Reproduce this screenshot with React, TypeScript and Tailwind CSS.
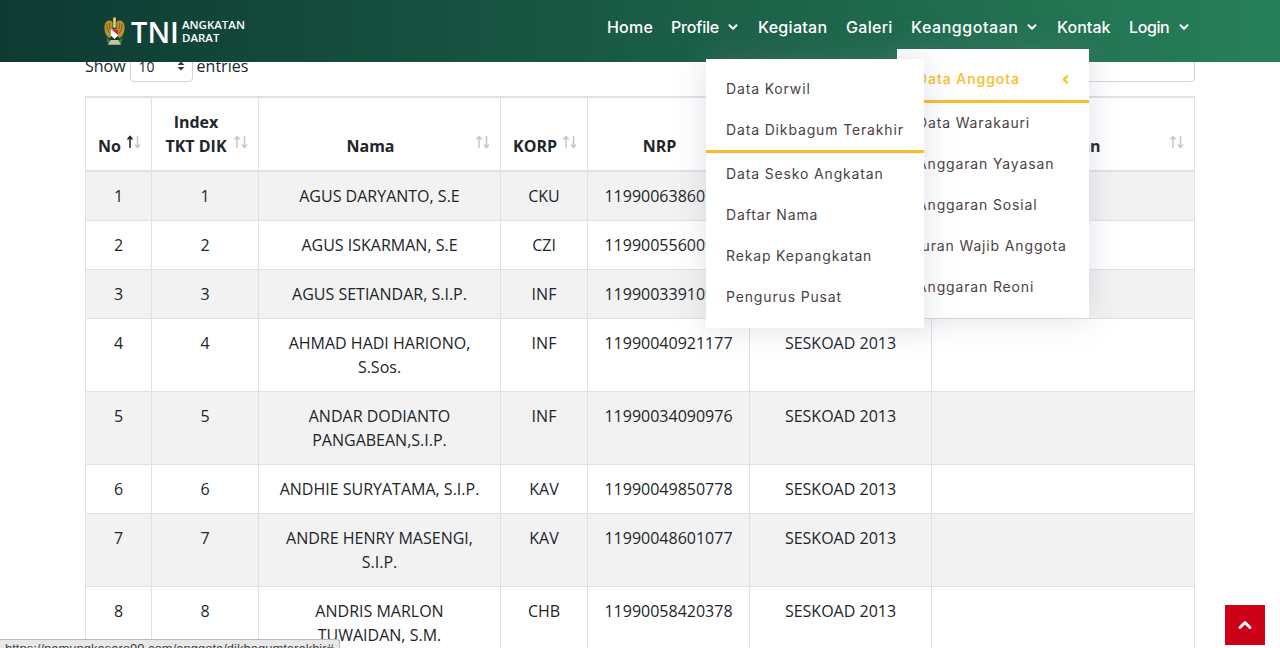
import { ChevronDown, ChevronLeft, ChevronUp } from 'lucide-react';

const rows = [
    { no: 1, nama: 'AGUS DARYANTO, S.E', korp: 'CKU', nrp: '11990063860778' },
    { no: 2, nama: 'AGUS ISKARMAN, S.E', korp: 'CZI', nrp: '11990055600978' },
    { no: 3, nama: 'AGUS SETIANDAR, S.I.P.', korp: 'INF', nrp: '11990033910976' },
    { no: 4, nama: 'AHMAD HADI HARIONO, S.Sos.', korp: 'INF', nrp: '11990040921177' },
    { no: 5, nama: 'ANDAR DODIANTO PANGABEAN,S.I.P.', korp: 'INF', nrp: '11990034090976' },
    { no: 6, nama: 'ANDHIE SURYATAMA, S.I.P.', korp: 'KAV', nrp: '11990049850778' },
    { no: 7, nama: 'ANDRE HENRY MASENGI, S.I.P.', korp: 'KAV', nrp: '11990048601077' },
    { no: 8, nama: 'ANDRIS MARLON TUWAIDAN, S.M.', korp: 'CHB', nrp: '11990058420378' },
];

const menuProfile = ['Data Korwil', 'Data Dikbagum Terakhir', 'Data Sesko Angkatan', 'Daftar Nama', 'Rekap Kepangkatan', 'Pengurus Pusat'];
const menuAnggota = ['Data Warakauri', 'Anggaran Yayasan', 'Anggaran Sosial', 'Iuran Wajib Anggota', 'Anggaran Reoni'];

function SortArrows({ active }: { active?: boolean }) {
    return (
        <svg className="absolute right-[9px] bottom-[21px]" width="16" height="14" viewBox="0 0 16 14" fill="none" strokeWidth="1.5">
            <path d="M4 13V2M1.5 4.5 4 1.5l2.5 3" stroke={active ? '#212529' : '#c4c6c8'} />
            <path d="M11.5 1v11M9 9.5l2.5 3 2.5-3" stroke="#c4c6c8" />
        </svg>
    );
}

function Th({ children, active }: { children: React.ReactNode; active?: boolean }) {
    return (
        <th className="relative border border-b-2 border-[#dee2e6] pt-3 pb-3 pl-3 pr-[30px] align-bottom text-center font-bold">
            {children}
            <SortArrows active={active} />
        </th>
    );
}

function Emblem() {
    return (
        <svg width="21" height="30" viewBox="0 0 22 31">
            <path d="M9 6C5 3 1 5 .5 11c-.4 5 1.5 10 5.5 12l3-4z" fill="#b8912f" />
            <path d="M13 6c4-3 8-1 8.5 5 .4 5-1.5 10-5.5 12l-3-4z" fill="#b8912f" />
            <path d="M3 8c0 4 1 8 4 11M5.500 7c0 3 .5 6 2 9M19 8c0 4-1 8-4 11M16.500 7c0 3-.5 6-2 9" stroke="#6b5a1e" strokeWidth=".9" fill="none" />
            <rect x="9.700" y="3" width="2.600" height="9" fill="#f0d878" />
            <circle cx="11" cy="2.500" r="1.500" fill="#e8c95a" />
            <path d="M7 14h8v6l-4 4-4-4z" fill="#fff" />
            <path d="M8 14h7v6z" fill="#d3202a" />
            <path d="M2.500 21c2 4 5 6 8.500 6s6.500-2 8.500-6l-1 7H3.500z" fill="#3d7a3a" />
            <path d="M7 25h8l3 5H4z" fill="#c9c2a4" />
        </svg>
    );
}

function NavItem({ label, labelClass, caret }: { label: string; labelClass: string; caret?: boolean }) {
    return (
        <a className="flex items-center gap-[7px] text-white">
            <span className={labelClass}>{label}</span>
            {caret && <ChevronDown size={14} strokeWidth={3.5} />}
        </a>
    );
}

export default function App() {
    return (
        <div className="relative h-[648px] w-full overflow-hidden bg-white text-[#212529] [font-family:'Open_Sans',sans-serif]">
            <header className="absolute inset-x-0 top-0 z-10 flex h-[62px] items-center justify-between bg-linear-to-r from-[#0e3a32] to-[#278059] pl-[104px] pr-[89px]">
                <div className="flex items-center gap-[5px] text-white">
                    <Emblem />
                    <span className="ml-px text-[29px] leading-none font-semibold">TNI</span>
                    <span className="-ml-[2px] text-[11.5px] leading-[13px] font-semibold">
                        ANGKATAN
                        <br />
                        DARAT
                    </span>
                </div>
                <nav className="mb-[9px] flex items-center gap-[18px] text-[16px] font-medium whitespace-nowrap [font-family:Inter,sans-serif]">
                    <NavItem label="Home" labelClass="w-[46px] tracking-[0.2px]" />
                    <NavItem label="Profile" labelClass="w-[48px] tracking-[-0.2px]" caret />
                    <NavItem label="Kegiatan" labelClass="w-[70px] tracking-[0.3px]" />
                    <NavItem label="Galeri" labelClass="w-[47px] tracking-[0.3px]" />
                    <NavItem label="Keanggotaan" labelClass="w-[107px] tracking-[0.55px]" caret />
                    <NavItem label="Kontak" labelClass="w-[54px] tracking-[0.05px]" />
                    <NavItem label="Login" labelClass="w-[41px] tracking-[-0.4px]" caret />
                </nav>
            </header>

            <main className="mx-auto w-[1110px] pt-[50px]">
                <div className="mb-[14px] flex h-8 items-center justify-between">
                    <div className="flex items-center gap-[4px]">
                        Show
                        <div className="flex h-8 w-[63px] items-center justify-between rounded border border-[#ced4da] pl-2 pr-[7px] text-sm">
                            <span className="mt-[2px]">10</span>
                            <svg width="8" height="12" viewBox="0 0 8 12" fill="#343a40">
                                <path d="M4 1.500 7.500 5h-7zM4 10.500.5 7h7z" />
                            </svg>
                        </div>
                        entries
                    </div>
                    <div className="h-8 w-[200px] rounded border border-[#ced4da]" />
                </div>

                <table className="w-[1110px] table-fixed border-collapse border-t-2 border-[#dee2e6]">
                    <colgroup>
                        <col className="w-[66px]" />
                        <col className="w-[107px]" />
                        <col className="w-[242px]" />
                        <col className="w-[87px]" />
                        <col className="w-[162px]" />
                        <col className="w-[182px]" />
                        <col />
                    </colgroup>
                    <thead>
                        <tr>
                            <Th active>No</Th>
                            <Th>
                                Index
                                <br />
                                TKT DIK
                            </Th>
                            <Th>Nama</Th>
                            <Th>KORP</Th>
                            <Th>NRP</Th>
                            <Th>Pendidikan</Th>
                            <Th>Keterangan</Th>
                        </tr>
                    </thead>
                    <tbody>
                        {rows.map((r) => (
                            <tr key={r.no} className="text-center odd:bg-[#f2f2f2] [&>td]:border [&>td]:border-[#dee2e6] [&>td]:p-3 [&>td]:align-top">
                                <td>{r.no}</td>
                                <td>{r.no}</td>
                                <td>{r.nama}</td>
                                <td>{r.korp}</td>
                                <td>{r.nrp}</td>
                                <td>SESKOAD 2013</td>
                                <td></td>
                            </tr>
                        ))}
                    </tbody>
                </table>
            </main>

            {/* dropdowns */}
            <div className="absolute left-[897px] top-[49px] z-20 w-[192px] bg-white pt-3 text-sm tracking-[0.85px] text-[#4a3f45] shadow-[0_0_30px_rgba(127,137,161,0.25)] [font-family:Inter,sans-serif]">
                <div className="flex h-[42px] items-center justify-between border-b-[3px] border-[#fdbb23] pb-[3px] pl-5 pr-[17px] font-medium tracking-[0.95px] text-[#fdbb23]">
                    Data Anggota
                    <ChevronLeft size={13} strokeWidth={4} />
                </div>
                <div className="-mt-px">
                    {menuAnggota.map((m) => (
                        <div key={m} className="flex h-[41px] items-center pl-5">
                            {m}
                        </div>
                    ))}
                </div>
                <div className="h-[11px]" />
            </div>
            <div className="absolute left-[706px] top-[59px] z-30 w-[218px] bg-white pt-[9px] pb-[11px] text-sm tracking-[0.85px] text-[#4a3f45] shadow-[0_0_30px_rgba(127,137,161,0.25)] [font-family:Inter,sans-serif]">
                {menuProfile.map((m, i) => (
                    <div key={m} className={i === 1 ? 'flex h-[44px] items-center border-b-[3px] border-[#fdbb23] pl-5' : 'flex h-[41px] items-center pl-5'}>
                        {m}
                    </div>
                ))}
            </div>

            <a className="absolute right-[15px] bottom-[3px] z-30 flex h-10 w-10 items-center justify-center bg-[#cc0016] text-white">
                <ChevronUp size={20} strokeWidth={3.5} />
            </a>

            <div className="absolute bottom-0 left-0 z-40 h-[9px] w-[340px] overflow-hidden rounded-tr-[3px] border-t border-r border-[#b8b8b8] bg-[#e8e8e8] pt-px pl-[5px] text-[13px] leading-[15px] whitespace-nowrap text-[#444] [font-family:'Liberation_Sans',sans-serif]">
                https://pamungkasaro99.com/anggota/dikbagumterakhir#
            </div>
        </div>
    );
}
